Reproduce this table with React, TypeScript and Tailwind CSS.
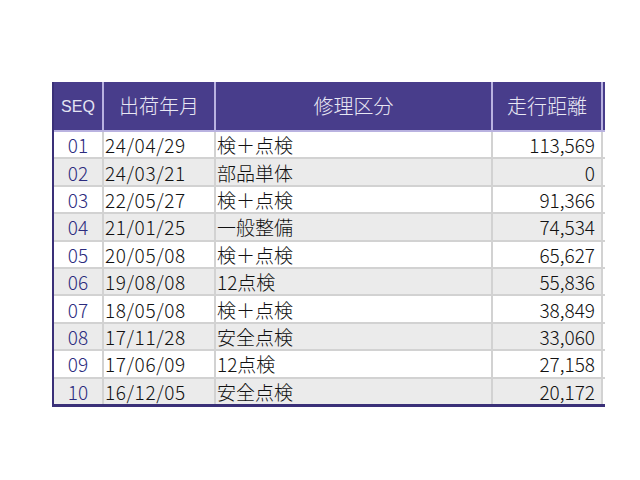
const rows = [
  { seq: '01', date: '24/04/29', kind: '検＋点検', dist: '113,569' },
  { seq: '02', date: '24/03/21', kind: '部品単体', dist: '0' },
  { seq: '03', date: '22/05/27', kind: '検＋点検', dist: '91,366' },
  { seq: '04', date: '21/01/25', kind: '一般整備', dist: '74,534' },
  { seq: '05', date: '20/05/08', kind: '検＋点検', dist: '65,627' },
  { seq: '06', date: '19/08/08', kind: '12点検', dist: '55,836' },
  { seq: '07', date: '18/05/08', kind: '検＋点検', dist: '38,849' },
  { seq: '08', date: '17/11/28', kind: '安全点検', dist: '33,060' },
  { seq: '09', date: '17/06/09', kind: '12点検', dist: '27,158' },
  { seq: '10', date: '16/12/05', kind: '安全点検', dist: '20,172' },
]

const jp = { fontFamily: '"Noto Sans CJK JP", "Noto Sans", sans-serif' }

export default function App() {
  return (
    <div className="min-h-[480px] w-[640px] bg-white pt-[82px] pl-[52px] font-light" style={jp}>
      <div className="w-[553px] border-b-[3px] border-l-2 border-[#3a3078]">
        {/* Header */}
        <div className="grid h-[50px] grid-cols-[48px_110px_275px_108px_2px] gap-x-[2px] border-b-2 border-[#b9b2e0] bg-[#b9b2e0]">
          <div className="flex items-center justify-center bg-[#483d8b] pt-[2px] text-[16px] font-normal text-[#e4e4f2]" style={{ fontFamily: '"Liberation Sans", Arial, sans-serif' }}>
            SEQ
          </div>
          <div className="flex items-center justify-center bg-[#483d8b] text-[20px] text-[#e8e8f4]">出荷年月</div>
          <div className="flex items-center justify-center bg-[#483d8b] text-[20px] text-[#e8e8f4]">修理区分</div>
          <div className="flex items-center justify-center bg-[#483d8b] text-[20px] text-[#e8e8f4]">走行距離</div>
          <div className="bg-[#483d8b]" />
        </div>

        {/* Body */}
        <div className="grid auto-rows-[25.4px] grid-cols-[48px_110px_275px_108px_2px] gap-x-[2px] gap-y-[2px] bg-[#d2d2d2]">
          {rows.map((r, i) => {
            const bg = i % 2 === 0 ? 'bg-white' : 'bg-[#ebebeb]'
            return [
              <div key={r.seq + 'a'} className={`${bg} flex items-center justify-center text-[19px] leading-none text-[#2b2b7e]`}>
                {r.seq}
              </div>,
              <div key={r.seq + 'b'} className={`${bg} flex items-center pl-[1px] text-[19px] leading-none tracking-[0.6px] text-[#111]`}>
                {r.date}
              </div>,
              <div key={r.seq + 'c'} className={`${bg} flex items-center pl-[1px] text-[19px] leading-none text-[#111]`}>
                {r.kind}
              </div>,
              <div key={r.seq + 'd'} className={`${bg} flex items-center justify-end pr-[6px] text-[19px] leading-none text-[#111]`}>
                {r.dist}
              </div>,
              <div key={r.seq + 'e'} className="bg-white" />,
            ]
          })}
        </div>
      </div>
    </div>
  )
}
